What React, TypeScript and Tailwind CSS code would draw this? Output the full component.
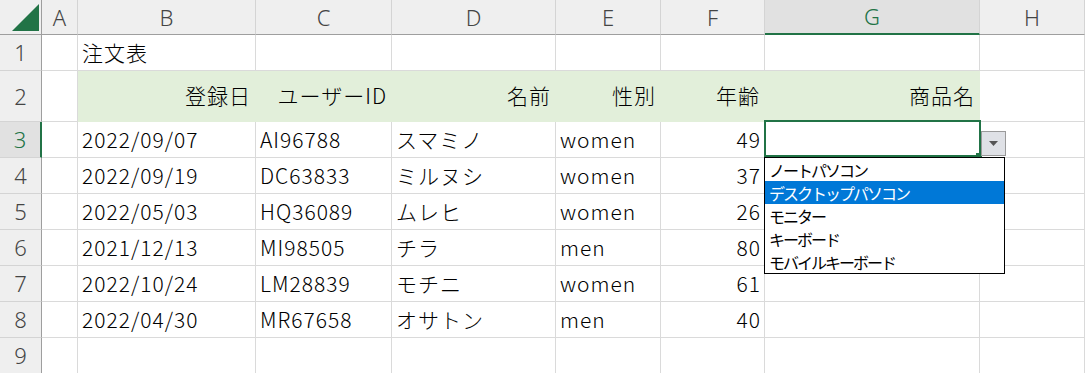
const cols = ['A', 'B', 'C', 'D', 'E', 'F', 'G', 'H'];

const rows = [
  ['2022/09/07', 'AI96788', 'スマミノ', 'women', '49'],
  ['2022/09/19', 'DC63833', 'ミルヌシ', 'women', '37'],
  ['2022/05/03', 'HQ36089', 'ムレヒ', 'women', '26'],
  ['2021/12/13', 'MI98505', 'チラ', 'men', '80'],
  ['2022/10/24', 'LM28839', 'モチニ', 'women', '61'],
  ['2022/04/30', 'MR67658', 'オサトン', 'men', '40'],
];

const headers = ['登録日', 'ユーザーID', '名前', '性別', '年齢', '商品名'];

const options = ['ノートパソコン', 'デスクトップパソコン', 'モニター', 'キーボード', 'モバイルキーボード'];

const cell = 'border-r border-b border-[#dadada] flex items-center overflow-visible whitespace-nowrap';

function RowHead({ n, active }: { n: number; active?: boolean }) {
  return (
    <div
      className={
        active
          ? 'bg-[#e1e1e1] border-b border-[#d4d4d4] border-r-2 border-r-[#217346] text-[#217346] flex items-center justify-center font-["Noto_Sans",sans-serif] font-light text-[22px] tracking-normal'
          : 'bg-[#efefef] border-b border-[#d4d4d4] border-r border-r-[#9e9e9e] text-[#444] flex items-center justify-center font-["Noto_Sans",sans-serif] font-light text-[22px] tracking-normal'
      }
    >
      {n}
    </div>
  );
}

export default function App() {
  return (
    <div className='w-[1085px] h-[373px] overflow-hidden bg-white font-["Noto_Sans_CJK_JP",sans-serif] font-light text-[21px] tracking-[1px] text-black'>
      <div className="grid grid-cols-[42px_36px_178px_136px_164px_105px_104px_215px_1fr] grid-rows-[35px_36px_51px_repeat(7,36px)]">
        {/* corner */}
        <div className="bg-[#efefef] border-r border-b border-[#9e9e9e] relative">
          <svg className="absolute left-0 top-0" width="42" height="35" viewBox="0 0 42 35">
            <polygon points="12,31 39,31 39,4" fill="#217346" />
          </svg>
        </div>
        {/* column headers */}
        {cols.map((c) =>
          c === 'G' ? (
            <div
              key={c}
              className='bg-[#e1e1e1] border-r border-[#d4d4d4] border-b-2 border-b-[#217346] text-[#217346] flex items-center justify-center font-["Noto_Sans",sans-serif] text-[22px] tracking-normal'
            >
              {c}
            </div>
          ) : (
            <div
              key={c}
              className='bg-[#efefef] border-r border-[#d4d4d4] border-b border-b-[#9e9e9e] text-[#444] flex items-center justify-center font-["Noto_Sans",sans-serif] text-[22px] tracking-normal'
            >
              {c}
            </div>
          )
        )}

        {/* row 1 */}
        <RowHead n={1} />
        <div className={cell} />
        <div className={`${cell} pl-1`}>注文表</div>
        <div className={cell} />
        <div className={cell} />
        <div className={cell} />
        <div className={cell} />
        <div className={cell} />
        <div className={cell} />

        {/* row 2 */}
        <RowHead n={2} />
        <div className={cell} />
        {headers.map((h) => (
          <div
            key={h}
            className="bg-[#e2efda] border-r border-b border-[#e2efda] flex items-center justify-end pr-1 whitespace-nowrap"
          >
            {h}
          </div>
        ))}
        <div className={cell} />

        {/* data rows */}
        {rows.map((r, i) => (
          <div key={i} className="contents">
            <RowHead n={i + 3} active={i === 0} />
            <div className={cell} />
            <div className={`${cell} pl-1`}>{r[0]}</div>
            <div className={`${cell} pl-1`}>{r[1]}</div>
            <div className={`${cell} pl-1`}>{r[2]}</div>
            <div className={`${cell} pl-1`}>{r[3]}</div>
            <div className={`${cell} justify-end pr-[3px]`}>{r[4]}</div>
            {i === 0 ? (
              <div className={`${cell} relative`}>
                {/* selection */}
                <div className="absolute -left-px -top-[2px] w-[217px] h-[37px] border-2 border-[#217346] z-10" />
                <div className="absolute left-[211px] top-[31px] w-[6px] h-[5px] bg-[#217346] z-20" />
                {/* dropdown button */}
                <div className="absolute left-[216px] top-[9px] w-[25px] h-[25px] bg-[#dfe1e6] border border-[#9a9a9a] flex items-center justify-center z-20">
                  <svg width="9" height="5" viewBox="0 0 9 5">
                    <polygon points="0,0 9,0 4.5,5" fill="#555" />
                  </svg>
                </div>
                {/* dropdown list */}
                <div className="absolute -left-px top-[35px] w-[241px] bg-white border border-black z-30 font-['Noto_Sans_CJK_JP',sans-serif] font-normal text-[16px] tracking-[-2px] leading-none">
                  {options.map((o, k) => (
                    <div
                      key={o}
                      className={
                        k === 1
                          ? 'h-[23px] flex items-center pl-1 bg-[#0078d7] text-white'
                          : 'h-[23px] flex items-center pl-1 text-black'
                      }
                    >
                      {o}
                    </div>
                  ))}
                </div>
              </div>
            ) : (
              <div className={cell} />
            )}
            <div className={cell} />
          </div>
        ))}

        {/* row 9 */}
        <RowHead n={9} />
        {cols.map((c) => (
          <div key={c} className={cell} />
        ))}
      </div>
    </div>
  );
}
